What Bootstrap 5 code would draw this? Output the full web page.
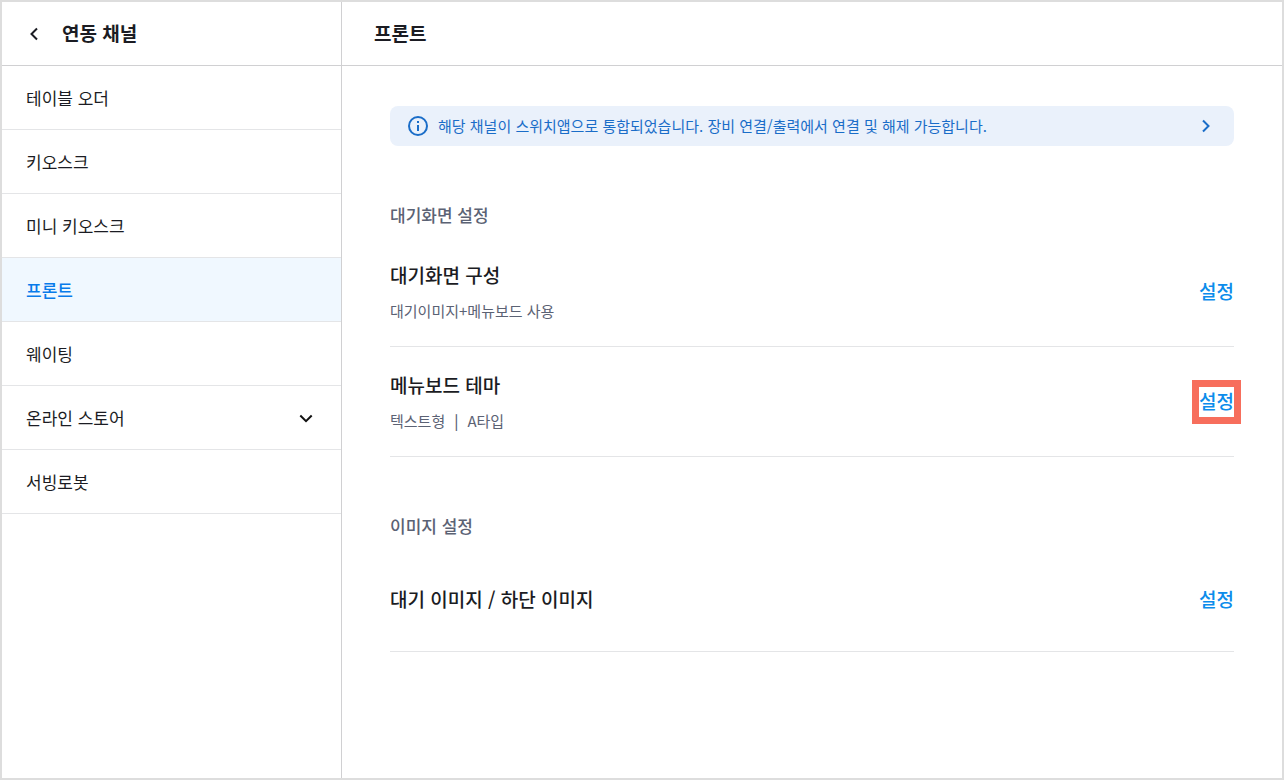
<!DOCTYPE html>
<html lang="ko">
<head>
<meta charset="utf-8">
<meta name="viewport" content="width=device-width, initial-scale=1">
<title>연동 채널 - 프론트</title>
<link href="https://cdn.jsdelivr.net/npm/bootstrap@5.3.0/dist/css/bootstrap.min.css" rel="stylesheet">
<style>
  body { font-family: "Noto Sans CJK KR", sans-serif; color: #1b1c23; background: #fff; }
  .app-frame { border: 2px solid #ddd; }
  .side-panel { width: 340px; border-right: 1px solid #d0d0d2; }
  .top-bar { height: 64px; border-bottom: 1px solid #d0d0d2; }
  .side-panel .top-bar { padding-left: 20px; }
  .bar-title { padding-bottom: 2px; font-size: 19px; line-height: 28px; font-weight: 700; }
  .back-btn { width: 24px; height: 24px; color: #1b1c23; }
  .channel-link { height: 64px; padding: 0 24px; font-size: 17px; line-height: 24px; color: #1b1c23; border-bottom: 1px solid #e4e5e7; text-decoration: none; }
  .channel-link.active { background: #f0f8ff; color: #087bea; font-weight: 500; }
  .content-area { padding: 40px 48px; }
  .notice { height: 40px; padding: 0 16px; border-radius: 8px; background: #eaf1fb; color: #1a6dc8; font-size: 15px; line-height: 24px; text-decoration: none; }
  .group-title { margin: 57px 0 10px; font-size: 17px; line-height: 24px; font-weight: 500; color: #5b6274; }
  .setting { min-height: 110px; border-bottom: 1px solid #e4e5e7; }
  .setting-short { min-height: 104px; }
  .setting-name { margin: 0; padding-bottom: 2px; font-size: 19px; line-height: 28px; font-weight: 500; }
  .setting-desc { margin: 8px 0 0; font-size: 15px; line-height: 24px; color: #5b6274; }
  .desc-parts { gap: 9px; }
  .set-btn { font-size: 19px; line-height: 28px; font-weight: 500; color: #0c8ceb; border-radius: 0; }
  .set-btn.marked { outline: 7px solid #f76e5c; }
  .set-label { padding-bottom: 2px; }
</style>
</head>
<body>
<div class="app-frame d-flex min-vh-100">
  <aside class="side-panel flex-shrink-0">
    <header class="top-bar d-flex align-items-center">
      <button type="button" class="back-btn btn p-0 border-0 d-flex" aria-label="뒤로">
        <svg width="24" height="24" viewBox="0 0 24 24" fill="none" stroke="currentColor" stroke-width="2"><path d="M15 6.500 9.500 12l5.500 5.500"/></svg>
      </button>
      <h1 class="bar-title mb-0 ms-3">연동 채널</h1>
    </header>
    <nav>
      <a href="#" class="channel-link d-flex align-items-center">테이블 오더</a>
      <a href="#" class="channel-link d-flex align-items-center">키오스크</a>
      <a href="#" class="channel-link d-flex align-items-center">미니 키오스크</a>
      <a href="#" class="channel-link d-flex align-items-center active" aria-current="page">프론트</a>
      <a href="#" class="channel-link d-flex align-items-center">웨이팅</a>
      <a href="#" class="channel-link d-flex align-items-center justify-content-between">온라인 스토어
        <svg width="24" height="24" viewBox="0 0 24 24" fill="none" stroke="#111" stroke-width="2"><path d="m7.300 9.500 5.700 5.700 5.700-5.700"/></svg>
      </a>
      <a href="#" class="channel-link d-flex align-items-center">서빙로봇</a>
    </nav>
  </aside>
  <main class="flex-grow-1">
    <header class="top-bar d-flex align-items-center px-4">
      <h2 class="bar-title mb-0 ms-2">프론트</h2>
    </header>
    <div class="content-area">
      <a href="#" class="notice d-flex align-items-center">
        <svg class="flex-shrink-0" width="24" height="24" viewBox="0 0 24 24" fill="none" stroke="currentColor" stroke-width="2"><circle cx="12" cy="12" r="9"/><path d="M12 11v6M12 7v2"/></svg>
        <span class="flex-grow-1 ms-2">해당 채널이 스위치앱으로 통합되었습니다. 장비 연결/출력에서 연결 및 해제 가능합니다.</span>
        <svg class="flex-shrink-0" width="24" height="24" viewBox="0 0 24 24" fill="none" stroke="currentColor" stroke-width="2"><path d="m9 6.500 5.500 5.500-5.500 5.500"/></svg>
      </a>
      <section>
        <h3 class="group-title">대기화면 설정</h3>
        <div class="setting d-flex align-items-center justify-content-between">
          <div>
            <h4 class="setting-name">대기화면 구성</h4>
            <p class="setting-desc">대기이미지+메뉴보드 사용</p>
          </div>
          <button type="button" class="set-btn btn p-0 border-0"><span class="set-label d-block">설정</span></button>
        </div>
        <div class="setting d-flex align-items-center justify-content-between">
          <div>
            <h4 class="setting-name">메뉴보드 테마</h4>
            <p class="setting-desc desc-parts d-flex"><span>텍스트형</span><span class="fw-medium">|</span><span>A타입</span></p>
          </div>
          <button type="button" class="set-btn marked btn p-0 border-0"><span class="set-label d-block">설정</span></button>
        </div>
      </section>
      <section>
        <h3 class="group-title">이미지 설정</h3>
        <div class="setting setting-short d-flex align-items-center justify-content-between">
          <h4 class="setting-name">대기 이미지 / 하단 이미지</h4>
          <button type="button" class="set-btn btn p-0 border-0"><span class="set-label d-block">설정</span></button>
        </div>
      </section>
    </div>
  </main>
</div>
<script src="https://cdn.jsdelivr.net/npm/bootstrap@5.3.0/dist/js/bootstrap.bundle.min.js"></script>
</body>
</html>
